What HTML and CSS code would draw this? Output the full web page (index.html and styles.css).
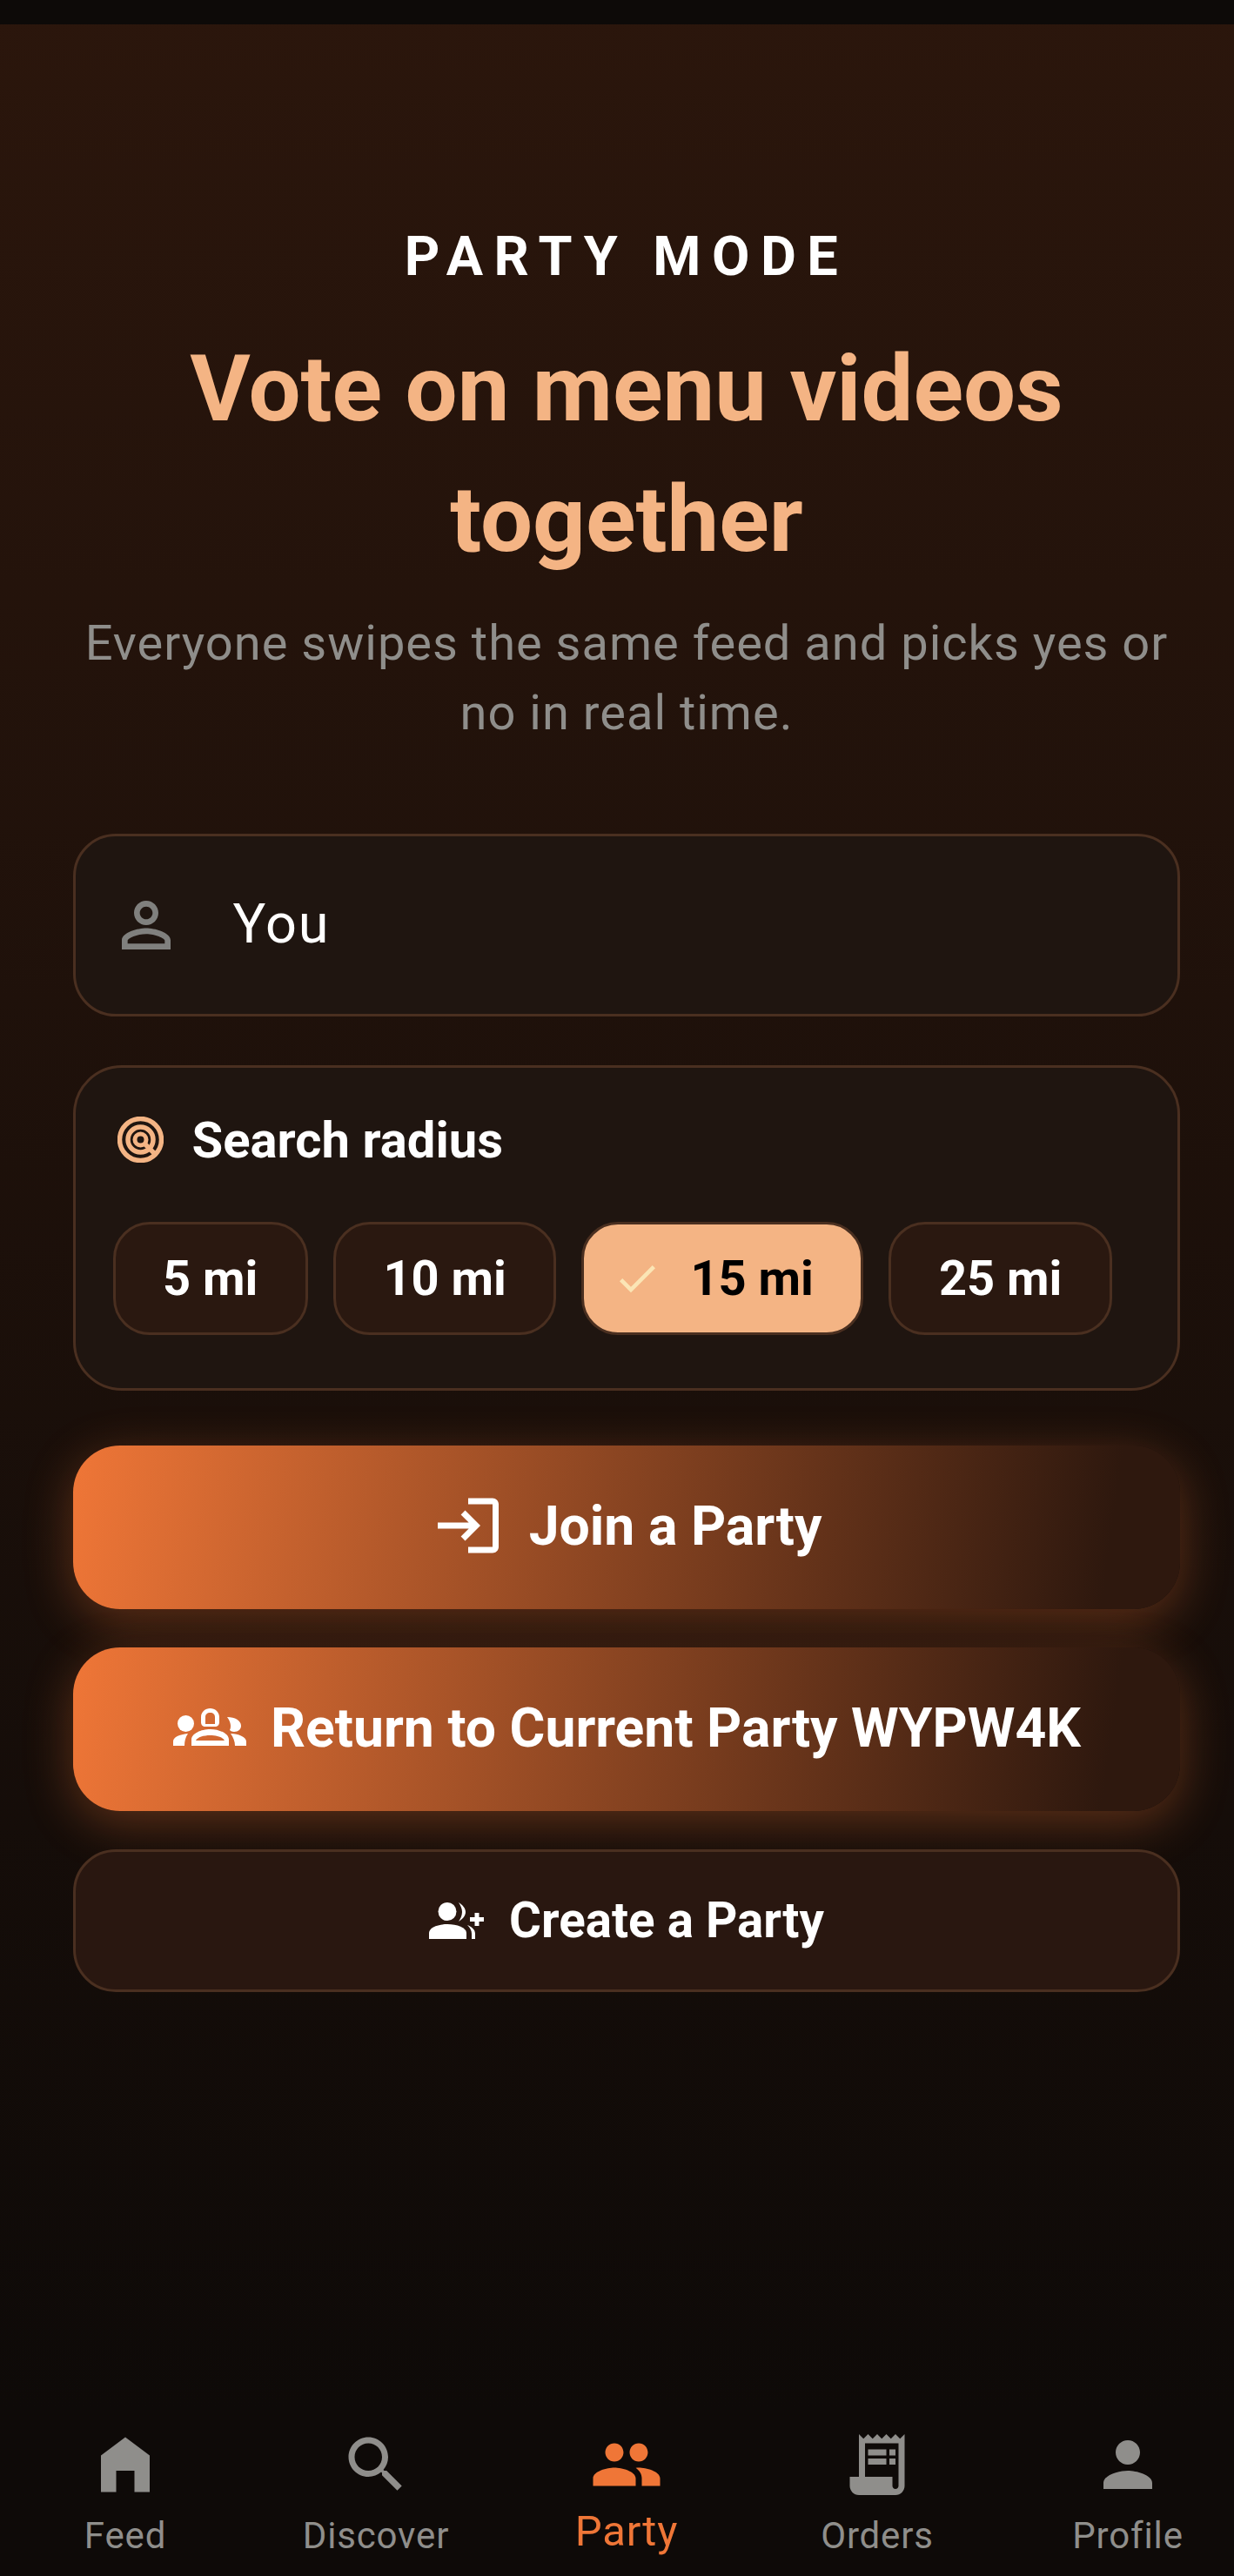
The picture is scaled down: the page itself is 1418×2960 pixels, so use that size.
FILE: index.html
```html
<!DOCTYPE html>
<html lang="en">
<head>
    <meta charset="UTF-8">
    <meta name="viewport" content="width=device-width, initial-scale=1.0">
    <title>Party Mode</title>
    <link rel="stylesheet" href="styles.css">
</head>
<body>
    <div class="screen">
        <div class="status-bar"></div>

        <main class="party">
            <p class="eyebrow">PARTY MODE</p>
            <h1 class="title">Vote on menu videos together</h1>
            <p class="subtitle">Everyone swipes the same feed and picks yes or no in real time.</p>

            <div class="name-field">
                <svg class="icon name-icon" viewBox="0 0 24 24"><path d="M12 5.9c1.16 0 2.1.94 2.1 2.1s-.94 2.1-2.1 2.1S9.9 9.16 9.9 8s.94-2.1 2.1-2.1m0 9c2.97 0 6.1 1.46 6.1 2.1v1.1H5.9V17c0-.64 3.13-2.1 6.1-2.1M12 4C9.79 4 8 5.79 8 8s1.79 4 4 4 4-1.79 4-4-1.79-4-4-4zm0 9c-2.67 0-8 1.34-8 4v3h16v-3c0-2.66-5.33-4-8-4z"/></svg>
                <span class="name-value">You</span>
            </div>

            <section class="radius-card">
                <div class="radius-head">
                    <svg class="radius-icon" viewBox="0 0 53 53">
                        <circle cx="26.500" cy="26.500" r="24"/>
                        <circle cx="26.500" cy="26.500" r="14.500"/>
                        <circle class="radius-core" cx="26.500" cy="26.500" r="6.500"/>
                        <path d="M30 30L44 44"/>
                    </svg>
                    <h2 class="radius-title">Search radius</h2>
                </div>
                <div class="chips">
                    <div class="chip">5 mi</div>
                    <div class="chip">10 mi</div>
                    <div class="chip chip-selected">
                        <svg class="chip-check" viewBox="0 0 24 24"><path d="M9 16.17L4.83 12l-1.42 1.41L9 19 21 7l-1.41-1.41z"/></svg>
                        15 mi
                    </div>
                    <div class="chip">25 mi</div>
                </div>
            </section>

            <button class="btn btn-glow">
                <svg class="icon" viewBox="0 0 24 24"><path d="M11 7L9.6 8.4l2.6 2.6H2v2h10.2l-2.6 2.6L11 17l5-5-5-5zm9 12h-8v2h8c1.1 0 2-.9 2-2V5c0-1.1-.9-2-2-2h-8v2h8v14z"/></svg>
                Join a Party
            </button>
            <button class="btn btn-glow">
                <svg class="groups-icon" viewBox="0 0 85 44">
                    <path fill-rule="evenodd" d="M33 10C33 4 38 0 43.500 0S54 4 54 10V16c0 3-2 5-5 5H38c-3 0-5-2-5-5zM38 18h11v-8c0-3-2-5-5.500-5S38 7 38 10z"/>
                    <path fill-rule="evenodd" d="M22 43V36C22 29 33 24 43.500 24S65 29 65 36V43zM27 37h33c-2-4-9-6-16.500-6S29 33 27 37z"/>
                    <circle cx="15.500" cy="17.500" r="9.500"/>
                    <path d="M1 43V38C1 33 8 30 18 29C15 33 14 38 14 43z"/>
                    <path d="M63 10c9 0 16 4 16 10 0 4-3 7-8 7-2 0-4-1-5-2 2-4 1-10-3-15z"/>
                    <path d="M67 29C76 29 85 33 85 38V43H72C72 38 70 33 67 29z"/>
                </svg>
                Return to Current Party WYPW4K
            </button>
            <button class="btn btn-outline">
                <svg class="add-icon" viewBox="0 0 64 42">
                    <circle cx="21" cy="10.500" r="10.500"/>
                    <path d="M0 42V35C0 29 10 25 21 25S43 29 43 35V42z"/>
                    <path d="M34 0c5 3 8 7 8 11s-3 8-8 11c2-3 4-7 4-11s-2-8-4-11z"/>
                    <path d="M44 26c5 2 9 5 9 10v6h-4v-6c0-4-2-7-5-10z"/>
                    <path d="M52.500 12h5v5H63v5h-5.500v5h-5v-5H47v-5h5.500z"/>
                </svg>
                Create a Party
            </button>
        </main>

        <nav class="bottom-nav">
            <div class="nav-item">
                <svg class="icon" viewBox="0 0 24 24"><path d="M12 3L4 9v12h5v-7h6v7h5V9z"/></svg>
                <span class="nav-label">Feed</span>
            </div>
            <div class="nav-item">
                <svg class="icon" viewBox="0 0 24 24"><path d="M15.500 14h-.79l-.28-.27C15.410 12.590 16 11.110 16 9.500 16 5.910 13.090 3 9.500 3S3 5.910 3 9.500 5.910 16 9.500 16c1.610 0 3.090-.59 4.230-1.570l.27.28v.79l5 4.990L20.490 19l-4.990-5zm-6 0C7.010 14 5 11.990 5 9.500S7.010 5 9.500 5 14 7.010 14 9.500 11.990 14 9.500 14z"/></svg>
                <span class="nav-label">Discover</span>
            </div>
            <div class="nav-item nav-active">
                <svg class="icon" viewBox="0 0 24 24"><path d="M16 11c1.660 0 2.990-1.340 2.990-3S17.660 5 16 5c-1.660 0-3 1.340-3 3s1.340 3 3 3zm-8 0c1.660 0 2.990-1.340 2.990-3S9.660 5 8 5C6.340 5 5 6.340 5 8s1.340 3 3 3zm0 2c-2.330 0-7 1.170-7 3.500V19h14v-2.500c0-2.330-4.670-3.500-7-3.500zm8 0c-.29 0-.62.020-.97.050 1.160.84 1.970 1.970 1.970 3.450V19h6v-2.500c0-2.330-4.670-3.500-7-3.500z"/></svg>
                <span class="nav-label">Party</span>
            </div>
            <div class="nav-item">
                <svg class="icon" viewBox="0 0 24 24"><path d="M19.500 3.500L18 2l-1.500 1.500L15 2l-1.500 1.500L12 2l-1.500 1.500L9 2 7.500 3.500 6 2v14H3v3c0 1.660 1.340 3 3 3h12c1.660 0 3-1.340 3-3V2l-1.500 1.500zM19 19c0 .55-.45 1-1 1s-1-.45-1-1v-3H8V5h11v14z"/><path d="M9 7h6v2H9zm7 0h2v2h-2zm-7 3h6v2H9zm7 0h2v2h-2z"/></svg>
                <span class="nav-label">Orders</span>
            </div>
            <div class="nav-item">
                <svg class="icon" viewBox="0 0 24 24"><path d="M12 12c2.210 0 4-1.790 4-4s-1.790-4-4-4-4 1.790-4 4 1.790 4 4 4zm0 2c-2.670 0-8 1.340-8 4v2h16v-2c0-2.660-5.330-4-8-4z"/></svg>
                <span class="nav-label">Profile</span>
            </div>
        </nav>
    </div>
</body>
</html>
```

FILE: styles.css
```css
html, body {
    margin: 0;
    height: 2960px;
    overflow: hidden;
    background: #0e0b08;
}

/* the app lays out at 1440 wide, the window cuts off the right edge */
.screen {
    width: 1440px;
    height: 2960px;
    display: flex;
    flex-direction: column;
    font-family: Roboto, "Liberation Sans", sans-serif;
    color: #fff;
    background: linear-gradient(180deg, #2b160c 0, #0e0a08 2770px);
}

.status-bar {
    height: 28px;
    flex-shrink: 0;
    background: #0d0a08;
}

.party {
    flex: 1;
    display: flex;
    flex-direction: column;
    padding: 230px 84px 0;
    text-align: center;
}

.eyebrow {
    margin: 0 0 40px;
    font-size: 63px;
    line-height: 74px;
    font-weight: 700;
    letter-spacing: 12.5px;
}

.title {
    margin: 0 0 27px;
    font-size: 106.5px;
    line-height: 150px;
    font-weight: 700;
    color: #f4b484;
}

.subtitle {
    margin: 0 0 99px;
    font-size: 56px;
    line-height: 80px;
    letter-spacing: 1px;
    color: #8f8e8b;
}

.icon {
    width: 84px;
    height: 84px;
    flex-shrink: 0;
    fill: currentColor;
}

.name-field {
    height: 210px;
    box-sizing: border-box;
    display: flex;
    align-items: center;
    gap: 58px;
    padding-left: 38.5px;
    background: #1f1510;
    border: 3.5px solid #4a2f20;
    border-radius: 49px;
    margin-bottom: 56px;
}

.name-icon {
    color: #80807e;
}

.name-value {
    padding-bottom: 3px;
    font-size: 63px;
    letter-spacing: 1.75px;
}

.radius-card {
    box-sizing: border-box;
    height: 374px;
    padding: 51px 42.5px 0;
    background: #1f1510;
    border: 3.5px solid #4a2f20;
    border-radius: 56px;
    margin-bottom: 63px;
}

.radius-head {
    display: flex;
    align-items: center;
    gap: 33px;
    height: 63px;
    margin-bottom: 63px;
}

.radius-icon {
    width: 53px;
    height: 53px;
    margin-left: 5px;
    fill: none;
    stroke: #f4b484;
    stroke-width: 5.5;
}

.radius-core {
    stroke-width: 5;
}

.radius-title {
    margin: 0;
    font-size: 58px;
    font-weight: 700;
}

.chips {
    display: flex;
    gap: 29px;
}

.chip {
    height: 130px;
    box-sizing: border-box;
    display: flex;
    align-items: center;
    padding: 0 54.5px;
    background: #2a1810;
    border: 3.5px solid #4a2f20;
    border-radius: 42px;
    font-size: 56px;
    font-weight: 700;
}

.chip-selected {
    gap: 33px;
    padding-left: 33px;
    background: #f4b484;
    color: #000;
}

.chip-check {
    width: 56px;
    height: 56px;
    fill: #fbe5b5;
}

.btn {
    box-sizing: border-box;
    display: flex;
    align-items: center;
    justify-content: center;
    gap: 28px;
    width: 100%;
    padding: 0;
    border: none;
    color: #fff;
    font-family: inherit;
    font-weight: 700;
}

.btn-glow {
    height: 188px;
    padding-bottom: 4px;
    margin-bottom: 44px;
    border-radius: 54px;
    font-size: 62.5px;
    background: linear-gradient(98deg, #ef7637 0%, #2e180e 93%);
    box-shadow: 0 14px 56px rgba(239, 118, 55, 0.33);
}

.groups-icon {
    width: 85px;
    height: 44px;
    fill: #fff;
}

.btn-outline {
    height: 164px;
    position: relative;
    border: 3.5px solid #4a2f20;
    border-radius: 49px;
    font-size: 56.5px;
    background: #291710;
}

.add-icon {
    width: 64px;
    height: 42px;
    fill: #fff;
}

.bottom-nav {
    height: 170px;
    flex-shrink: 0;
    display: flex;
}

.nav-item {
    flex: 1;
    display: flex;
    flex-direction: column;
    align-items: center;
    color: #8f8e8b;
}

.nav-label {
    margin-top: 15px;
    font-size: 42px;
    line-height: 50px;
    letter-spacing: 0.85px;
}

.nav-active {
    color: #ef7637;
}

.nav-active .nav-label {
    margin-top: 6px;
    font-size: 49px;
    line-height: 58px;
}
```
